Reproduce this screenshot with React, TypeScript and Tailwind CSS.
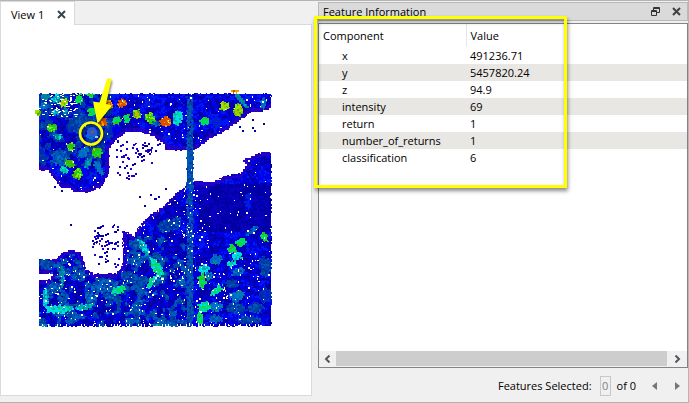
import { useMemo } from "react";

interface Feature {
  component: string;
  value: string;
}

const features: Feature[] = [
  { component: "x", value: "491236.71" },
  { component: "y", value: "5457820.24" },
  { component: "z", value: "94.9" },
  { component: "intensity", value: "69" },
  { component: "return", value: "1" },
  { component: "number_of_returns", value: "1" },
  { component: "classification", value: "6" },
];

// low to high elevation
const ramp = [
  "#2c00b4",
  "#2000d8",
  "#0a00c0",
  "#0000a4",
  "#0000e8",
  "#0018f4",
  "#0028b8",
  "#0040a0",
  "#0058b8",
  "#0070d0",
  "#008890",
  "#00a8b8",
  "#00dce8",
  "#00d888",
  "#00e040",
  "#40b800",
  "#90e800",
  "#c0b800",
  "#f0a000",
  "#d85000",
];

type Point = [number, number];

const northShore: Point[] = [
  [39, 93], [272, 93], [272, 107], [262, 110], [250, 111], [238, 120], [225, 130],
  [210, 137], [197, 147], [188, 150], [165, 149], [163, 142], [150, 134], [138, 130],
  [124, 132], [114, 139], [109, 147], [108, 172], [101, 186], [88, 191], [76, 192],
  [68, 187], [60, 186], [48, 170], [39, 169],
];

const southShore: Point[] = [
  [39, 259], [55, 259], [63, 251], [72, 249], [80, 252], [85, 268], [93, 273],
  [115, 273], [121, 266], [122, 231], [127, 231], [133, 236], [138, 225], [150, 214],
  [160, 207], [168, 200], [175, 193], [186, 184], [195, 180], [209, 182], [225, 175],
  [241, 172], [246, 164], [242, 159], [260, 152], [272, 152], [272, 326], [39, 326],
  [39, 280], [50, 278], [52, 273], [39, 272],
];

// x, y, half width, half height, angle, ramp index
const blobs: number[][] = [
  [38, 113, 3, 3, 0, 16], [64, 103, 4, 4, 0, 16], [45, 97, 5, 3, 0, 10], [56, 98, 4, 4, 0, 11],
  [44, 107, 4, 3, 0, 9], [55, 112, 4, 3, 0, 11], [66, 111, 3, 3, 0, 10],
  [79, 99, 4, 5, 0, 14], [91, 94, 5, 3, -20, 14], [92, 112, 4, 4, 0, 14], [108, 104, 5, 4, 0, 18],
  [122, 103, 4, 4, 0, 19], [103, 122, 4, 4, 0, 19], [117, 121, 4, 4, 0, 14], [127, 118, 3, 4, 0, 14],
  [137, 114, 4, 5, 0, 16], [150, 118, 5, 5, 0, 15], [165, 122, 6, 5, -30, 19], [178, 118, 5, 7, 10, 12],
  [205, 121, 5, 4, -20, 14], [225, 106, 5, 4, -30, 16], [238, 110, 4, 6, -10, 16],
  [241, 100, 9, 2, 48, 10], [235, 91, 4, 3, 0, 18], [263, 103, 3, 6, 0, 9],
  [52, 128, 5, 4, 0, 15], [58, 136, 4, 3, 0, 11], [71, 146, 4, 4, 0, 15], [97, 153, 5, 5, 0, 15],
  [69, 163, 5, 4, 0, 15], [78, 174, 5, 5, 0, 15], [64, 170, 4, 3, 0, 12], [88, 163, 3, 6, 30, 10],
  [83, 152, 4, 7, 40, 9], [99, 168, 3, 8, -30, 9], [80, 124, 11, 9, 0, 7], [60, 158, 8, 8, 0, 8],
  [155, 123, 5, 3, 0, 8], [91, 134, 5, 5, 0, 9],
  [144, 248, 10, 3, 58, 11], [157, 268, 11, 4, 62, 13], [152, 282, 3, 7, 30, 13], [119, 290, 7, 4, -20, 13],
  [60, 309, 15, 4, 0, 12], [84, 307, 10, 3, -10, 11], [45, 298, 3, 9, 0, 11], [46, 264, 7, 5, 0, 7],
  [62, 276, 2, 10, 0, 10], [101, 288, 10, 5, 0, 8], [241, 242, 5, 4, -20, 14], [232, 249, 4, 5, 0, 14],
  [237, 256, 5, 4, 0, 12], [232, 264, 4, 3, 0, 12], [204, 269, 5, 4, 0, 12], [202, 281, 4, 7, 0, 14],
  [217, 290, 7, 3, -40, 13], [204, 307, 6, 5, 0, 13], [200, 319, 3, 6, 0, 14], [264, 237, 5, 3, 50, 14],
  [216, 260, 6, 5, -20, 9], [252, 231, 7, 2, -40, 8], [238, 272, 7, 4, -20, 8], [209, 276, 4, 4, 0, 9],
  [232, 284, 6, 4, 0, 7], [237, 296, 7, 5, 0, 9], [236, 308, 9, 5, 0, 7], [256, 308, 8, 5, 0, 7],
  [216, 307, 6, 5, 0, 9], [248, 320, 11, 4, 0, 7], [216, 319, 6, 4, 0, 8], [265, 267, 6, 10, 0, 7],
  [265, 296, 6, 8, 0, 6], [248, 202, 3, 9, 0, 5], [170, 225, 12, 6, -20, 7],
  [137, 260, 5, 8, 0, 8], [128, 275, 5, 5, 0, 7], [45, 325, 4, 1, 0, 10], [155, 325, 5, 1, 0, 10],
];

// sparse returns over the water
const scatters = [
  { x: 116, y: 139, w: 42, h: 25, count: 36 },
  { x: 116, y: 164, w: 18, h: 15, count: 11 },
  { x: 92, y: 226, w: 28, h: 41, count: 50 },
];

const strays: Point[] = [
  [54, 186], [61, 190], [139, 196], [150, 194], [154, 198], [144, 205], [70, 224],
  [239, 126], [242, 130], [252, 119], [252, 127], [254, 130], [263, 123], [165, 188],
  [155, 198], [158, 196], [113, 224],
];

function createRandom(seed: number) {
  let s = seed;
  return () => {
    s = (s * 1664525 + 1013904223) >>> 0;
    return s / 4294967296;
  };
}

function isInside(x: number, y: number, shape: Point[]) {
  let inside = false;
  for (let i = 0, j = shape.length - 1; i < shape.length; j = i++) {
    const [xi, yi] = shape[i];
    const [xj, yj] = shape[j];
    if (yi > y !== yj > y && x < ((xj - xi) * (y - yi)) / (yj - yi) + xi) {
      inside = !inside;
    }
  }
  return inside;
}

function onLand(x: number, y: number) {
  return isInside(x, y, northShore) || isInside(x, y, southShore);
}

function nearWater(x: number, y: number) {
  return [[4, 0], [-4, 0], [0, 4], [0, -4]].some(([dx, dy]) => {
    const nx = Math.min(270, Math.max(41, x + dx));
    const ny = Math.min(324, Math.max(95, y + dy));
    return !onLand(nx, ny);
  });
}

function blobAt(x: number, y: number, limit: number) {
  for (const [bx, by, w, h, angle, level] of blobs) {
    const a = (angle * Math.PI) / 180;
    const dx = x + 1 - bx;
    const dy = y + 1 - by;
    const u = (dx * Math.cos(a) + dy * Math.sin(a)) / w;
    const v = (dy * Math.cos(a) - dx * Math.sin(a)) / h;
    if (u * u + v * v < limit) return level;
  }
  return -1;
}

function buildCloud() {
  const random = createRandom(41);
  const points: string[][] = [];
  const lattice = Array.from({ length: 4096 }, () => random());
  const noise = (x: number, y: number, scale: number) => {
    const gx = Math.floor(x / scale);
    const gy = Math.floor(y / scale);
    const fx = x / scale - gx;
    const fy = y / scale - gy;
    const at = (i: number, j: number) => lattice[((gy + j) * 61 + gx + i) & 4095];
    const top = at(0, 0) * (1 - fx) + at(1, 0) * fx;
    const bottom = at(0, 1) * (1 - fx) + at(1, 1) * fx;
    return top * (1 - fy) + bottom * fy;
  };
  let layer: string[] = [];
  const add = (x: number, y: number, level: number) => {
    const i = Math.max(0, Math.min(ramp.length - 1, Math.round(level)));
    layer[i] = (layer[i] ?? "") + `M${x} ${y}h2v2h-2z`;
  };

  for (let pass = 0; pass < 3; pass++) {
    layer = [];
    for (let y = 90; y < 325; y += 2) {
      for (let x = 35; x < 271; x += 2) {
        const px = pass === 0 ? x : x + Math.floor(random() * 2);
        const py = pass === 0 ? y : y + Math.floor(random() * 2);
        const strip = px >= 186 && px <= 192 && py > 95;
        const blob = blobAt(px, py, 0.7 + random() * 0.8);
        const outside = !onLand(px, py);
        if (outside && !strip && !(blob > 15 && (px < 40 || py < 94))) continue;
        if (pass > 0 && random() < 0.6) continue;

        if (strip && (outside || random() < 0.88)) {
          add(px, py, 7 + random() * 1.2);
          continue;
        }
        if (blob >= 0) {
          add(px, py, blob + random() * 1.8 - 0.9);
          continue;
        }
        if (nearWater(px, py)) {
          add(px, py, random() * 2.2 - 0.4);
          continue;
        }
        const n = noise(px, py, 9) * 0.45 + noise(px + 90, py, 4) * 0.55;
        let level = 0.8 + n * 4.2 + random() * 1.8;
        if (px < 186 && py > 235) level += n > 0.52 ? 2.6 + random() : 0;
        if (px < 112 && py < 165) level += n > 0.5 ? 2.2 : 0;
        if (px > 198 && py > 182 && py < 232) level = 1 + n * 2.2 + random();
        // street grid in the south east corner
        if (px > 194 && py > 268) {
          const dx = Math.abs(px - 225) % 24;
          const dy = Math.abs(py - 278) % 14;
          if (dx < 2 || dy < 2) level = 3 + random();
        }
        add(px, py, level);
      }
    }
    points.push(layer);
  }

  layer = [];
  for (const area of scatters) {
    for (let i = 0; i < area.count; i++) {
      const x = area.x + Math.floor(random() * area.w);
      const y = area.y + Math.floor(random() * area.h);
      const level = random() * 3;
      add(x, y, level);
      if (random() < 0.5) add(x + 2, y - Math.floor(random() * 3), level);
    }
  }
  strays.forEach(([x, y]) => add(x, y, 3));
  points.push(layer);

  // missing returns
  let gaps = "";
  for (let i = 0; i < 1050; i++) {
    const x = 39 + Math.floor(random() * 233);
    const y = 93 + Math.floor(random() * 233);
    const sparse = y > 255 || (x < 210 && y > 185);
    if (sparse || random() < 0.4) {
      const w = random() < 0.25 ? 2 : 1;
      const h = random() < 0.4 ? 2 : 1;
      gaps += `M${x} ${y}h${w}v${h}h-${w}z`;
    }
  }
  for (let i = 0; i < 75; i++) {
    const x = 39 + Math.floor(random() * 38);
    const y = 93 + Math.floor(random() * 24);
    gaps += `M${x} ${y}h2v1h-2z`;
  }
  for (let x = 39; x < 272; x += 3) {
    if (random() < 0.4) gaps += `M${x} 92h2v2h-2z`;
    if (random() < 0.5) gaps += `M${x} 324h1v2h-1z`;
  }
  return { points, gaps };
}

function PointCloud() {
  const { points, gaps } = useMemo(buildCloud, []);
  return (
    <svg
      width="310"
      height="270"
      viewBox="1 70 310 270"
      role="img"
      aria-label="Point cloud"
      className="block"
    >
      <g shapeRendering="crispEdges">
        {points.map((layer, pass) => (
          <g key={pass}>
            {layer.map((d, index) => (
              <path key={ramp[index]} d={d} fill={ramp[index]} />
            ))}
          </g>
        ))}
        <path d={gaps} fill="#fff" />
      </g>
      <circle cx="92" cy="132" r="5" fill="#2858d8" />
      <rect x="91" y="131" width="3" height="2" fill="#8a6020" />
      <rect x="95" y="136" width="3" height="2" fill="#b8c8d8" />
      <g style={{ filter: "drop-shadow(1px 2px 1px rgba(0,0,0,.45))" }}>
        <circle cx="91" cy="133.500" r="11" fill="none" stroke="#ff0" strokeWidth="2.600" />
        <path d="M107.500 78l4 1-5.500 25 6 1.500-14.500 18-4.500-22 6.500 1z" fill="#ff0" />
      </g>
    </svg>
  );
}

function CloseIcon({ className }: { className: string }) {
  return (
    <svg width="9" height="9" viewBox="0 0 9 9" className={className}>
      <path d="M1 1l7 7M8 1l-7 7" stroke="currentColor" strokeWidth="2" />
    </svg>
  );
}

function ViewPane() {
  return (
    <section className="flex min-w-0 flex-col pb-1.5">
      <div className="flex h-6 shrink-0">
        <div className="flex w-[75px] items-center justify-between border-x border-t border-[#d9d9d9] bg-white pt-px pr-2 pl-2.5">
          <span>View 1</span>
          <button aria-label="Close view">
            <CloseIcon className="text-[#34474f]" />
          </button>
        </div>
        <div className="flex-1 border-b border-[#d9d9d9]" />
      </div>
      <div className="flex-1 overflow-hidden border-x border-b border-[#d9d9d9] bg-white pt-[45px]">
        <PointCloud />
      </div>
    </section>
  );
}

function FeatureTable() {
  return (
    <table className="w-full table-fixed text-left">
      <thead>
        <tr className="h-[23px]">
          <th className="w-[147px] p-0 pl-1 font-normal">Component</th>
          <th className="border-l border-[#e5e5e5] p-0 pl-1 font-normal">Value</th>
        </tr>
      </thead>
      <tbody>
        {features.map((feature) => (
          <tr key={feature.component} className="h-[17px] even:bg-[#e9e7e3]">
            <td className="p-0 pl-[23px]">{feature.component}</td>
            <td className="p-0 pl-1">{feature.value}</td>
          </tr>
        ))}
      </tbody>
    </table>
  );
}

function FeaturePanel() {
  return (
    <section className="relative flex min-w-0 flex-col pt-px">
      <header className="mb-0.5 flex h-[19px] shrink-0 items-center justify-between border border-[#b9b9b9] bg-[#dadada] pr-1.5 pl-1">
        <h1>Feature Information</h1>
        <div className="flex items-center gap-3">
          <button aria-label="Float panel">
            <svg width="9" height="9" viewBox="0 0 9 9" className="text-[#333]">
              <path
                d="M2.500 3V.5h6v5H6M2.500 1.500h6M.5 3.500h5v5h-5zM.5 4.500h5"
                fill="none"
                stroke="currentColor"
              />
            </svg>
          </button>
          <button aria-label="Close panel">
            <CloseIcon className="text-[#404040]" />
          </button>
        </div>
      </header>
      <div className="flex flex-1 flex-col justify-between border border-[#82828a] bg-white">
        <FeatureTable />
        <div className="flex h-4 bg-[#f0f0f0] pb-px">
          <button aria-label="Scroll left" className="flex w-[17px] items-center justify-center">
            <svg width="7" height="8" viewBox="0 0 7 8">
              <path d="M5.500 .5L2 4l3.500 3.500" fill="none" stroke="#555" strokeWidth="2" />
            </svg>
          </button>
          <div className="flex-1 bg-[#cdcdcd]" />
          <button aria-label="Scroll right" className="flex w-5 items-center justify-center">
            <svg width="7" height="8" viewBox="0 0 7 8">
              <path d="M1.500 .5L5 4 1.500 7.500" fill="none" stroke="#555" strokeWidth="2" />
            </svg>
          </button>
        </div>
      </div>
      <footer className="flex h-[34px] shrink-0 items-center justify-end pt-px pr-1">
        <label htmlFor="selected">Features Selected:</label>
        <input
          id="selected"
          defaultValue="0"
          disabled
          className="mr-1.5 ml-2 h-5 w-[11px] border border-[#c8c8c8] text-center text-[#808080]"
        />
        <span>of 0</span>
        <button aria-label="Previous feature" className="ml-4">
          <svg width="5" height="8" viewBox="0 0 5 8">
            <path d="M5 0v8L0 4z" fill="#777" />
          </svg>
        </button>
        <button aria-label="Next feature" className="mr-1 ml-[18px]">
          <svg width="5" height="8" viewBox="0 0 5 8">
            <path d="M0 0v8l5-4z" fill="#777" />
          </svg>
        </button>
      </footer>
      {/* highlight drawn over the attribute list */}
      <div className="pointer-events-none absolute top-[15px] -left-1 h-[172px] w-[253px] border-[3px] border-[#ff0] shadow-[1px_3px_4px_rgba(0,0,0,0.45),inset_1px_3px_4px_rgba(0,0,0,0.35)]" />
    </section>
  );
}

export default function App() {
  return (
    <main className="grid min-h-screen grid-cols-[312fr_370fr] gap-x-1.5 border-y border-r border-[#b4b4b4] bg-[#f0f0f0] font-['Open_Sans','Noto_Sans',sans-serif] text-[11px] leading-[17px] text-black">
      <ViewPane />
      <FeaturePanel />
    </main>
  );
}
